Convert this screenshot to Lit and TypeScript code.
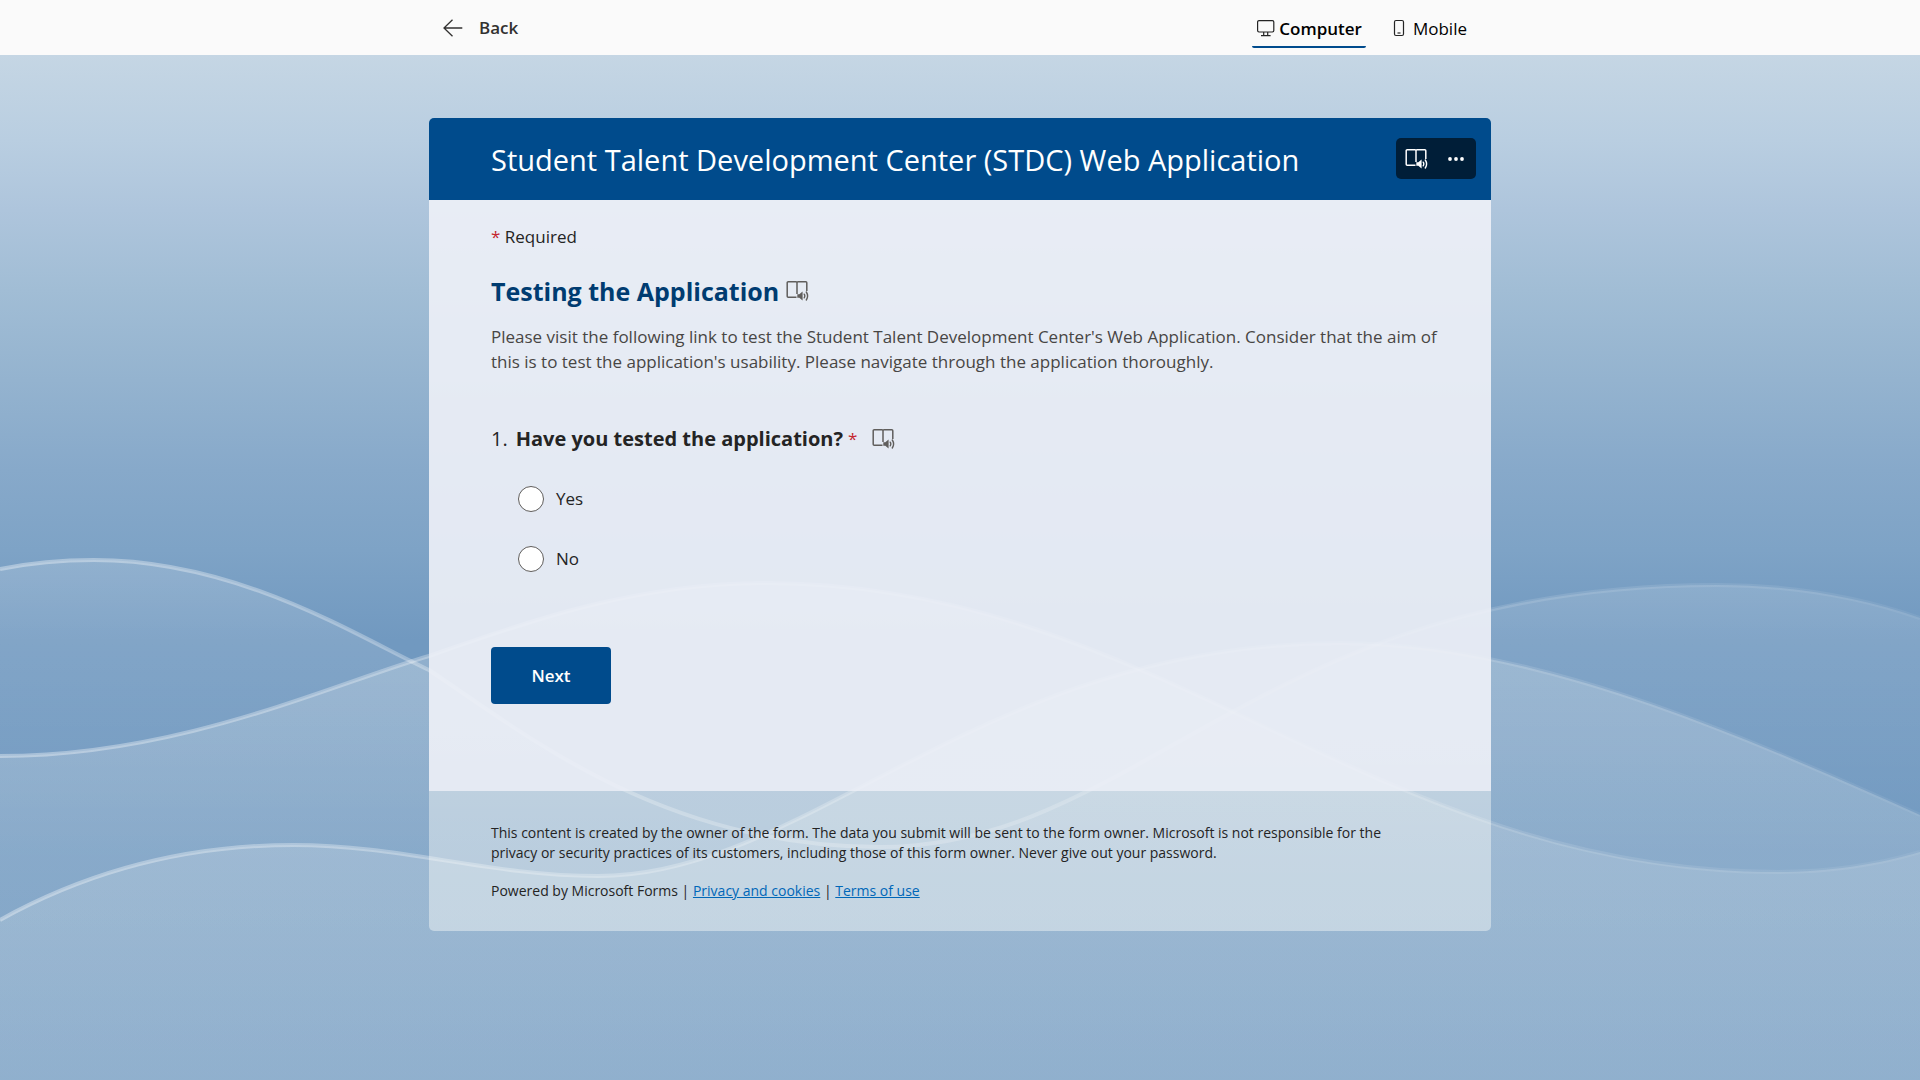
import { LitElement, html, svg, css } from "lit";
import { customElement, state } from "lit/decorators.js";

const WAVE_A =
  "M0 569 C30 563 62 560 94 560 C240 560 360 638 429 670 C520 730 660 847 880 847 C1140 847 1260 585 1717 585 C1790 585 1860 597 1920 618";
const WAVE_B =
  "M0 756 C180 756 330 685 429 656 C530 620 640 583 765 583 C1160 583 1370 872 1778 872 C1830 872 1880 864 1920 852";
const WAVE_C =
  "M0 920 C90 870 190 845 294 845 C400 845 490 876 598 876 C810 876 980 643 1341 643 C1530 643 1730 730 1920 815";

const readerIcon = html`<svg viewBox="0 0 24 24" aria-hidden="true" class="reader">
  <path d="M11.500 18.300H3.200a1 1 0 0 1-1-1V3.700a1 1 0 0 1 1-1H11a1 1 0 0 1 1 1V15M12 3.700a1 1 0 0 1 1-1h7.800a1 1 0 0 1 1 1V12" fill="none" stroke="currentColor" stroke-width="1.500"/>
  <path d="M12.300 15.200h2l3.300-2.800v9.200l-3.300-2.800h-2z" fill="currentColor"/>
  <path d="M19.200 15.200q1.200 1.800 0 3.600M21.300 13q2.600 4 0 8" fill="none" stroke="currentColor" stroke-width="1.400" stroke-linecap="round"/>
</svg>`;

@customElement("app-root")
export class AppRoot extends LitElement {
  @state() private answer = "";

  static styles = css`
    :host {
      display: block;
      font-family: "Open Sans", "Noto Sans", sans-serif;
      color: #242424;
    }
    * {
      box-sizing: border-box;
    }
    button {
      font: inherit;
      border: 0;
      background: none;
      padding: 0;
      color: inherit;
      cursor: pointer;
    }
    .page {
      position: relative;
      display: flex;
      flex-direction: column;
      min-height: 100vh;
      background: linear-gradient(#c5d6e4 55px, #b9cee1 140px, #aec5dc 210px, #a1bdd5 290px, #94b3cf 380px, #87a9ca 470px, #7ea3c6 550px, #7199c0 640px, #6f98c0 100%);
    }
    .waves {
      position: absolute;
      inset: 0;
      width: 100%;
      height: 100%;
    }
    .topbar {
      position: relative;
      background: #fafafa;
    }
    .topbar-inner {
      max-width: 1062px;
      height: 55px;
      margin: 0 auto;
      padding: 0 20px 0 14px;
      display: flex;
      align-items: center;
      justify-content: space-between;
    }
    .back {
      display: flex;
      align-items: center;
      gap: 16px;
      font-size: 17px;
      font-weight: 600;
      color: #323130;
    }
    .back svg {
      width: 20px;
      height: 20px;
    }
    .tabs {
      display: flex;
      gap: 22px;
      margin-top: 3px;
      color: #000000;
      font-size: 17px;
    }
    .tab {
      display: flex;
      align-items: center;
      gap: 3px;
      height: 38px;
      padding: 0 4px;
      border-bottom: 2px solid transparent;
      border-radius: 2px;
    }
    .tab.on {
      border-bottom-color: #004b8d;
      font-weight: 600;
    }
    .tab svg {
      width: 20px;
      height: 20px;
    }
    .tab .phone {
      width: 14px;
      margin-right: 4px;
    }
    .card {
      position: relative;
      width: 100%;
      max-width: 1062px;
      margin: 63px auto 149px;
      border-radius: 5px;
      overflow: hidden;
    }
    .head {
      display: flex;
      align-items: flex-start;
      justify-content: space-between;
      padding: 20px 15px 18px 62px;
      background: #004b8c;
      color: #ffffff;
    }
    h1 {
      margin: 0;
      font-size: 29px;
      line-height: 44px;
      font-weight: 400;
    }
    .tools {
      display: flex;
      align-items: center;
      height: 41px;
      border-radius: 5px;
      background: #001e38;
    }
    .tools button {
      display: flex;
      align-items: center;
      justify-content: center;
      width: 40px;
      height: 41px;
    }
    .reader {
      display: block;
      width: 24px;
      height: 24px;
    }
    .body {
      padding: 24px 48px 87px 62px;
      background: rgba(238, 241, 247, 0.9);
    }
    .required {
      margin: 0;
      font-size: 17px;
      line-height: 26px;
    }
    .star {
      font-size: 17px;
      color: #c4262e;
    }
    .row {
      display: flex;
      align-items: center;
    }
    .listen {
      color: #605e5c;
    }
    .section {
      margin-top: 23px;
      gap: 6px;
    }
    h2 {
      margin: 0;
      font-size: 25px;
      line-height: 36px;
      font-weight: 700;
      color: #003c71;
    }
    .intro {
      margin: 15px 0 0;
      font-size: 17px;
      line-height: 25px;
      color: #484644;
    }
    fieldset {
      margin: 50px 0 0;
      padding: 0;
      border: 0;
      min-width: 0;
    }
    legend {
      padding: 0;
      font-size: 20px;
      line-height: 30px;
    }
    .question {
      font-weight: 700;
      margin: 0 5px 0 8px;
    }
    .question-row .listen {
      margin-left: 14px;
    }
    .option {
      display: flex;
      align-items: center;
      gap: 12px;
      margin: 30px 0 0 27px;
      font-size: 17px;
      line-height: 30px;
      width: max-content;
    }
    .option input {
      appearance: none;
      width: 26px;
      height: 26px;
      margin: 0;
      border: 1px solid #605e5c;
      border-radius: 50%;
      background: #ffffff;
    }
    .option input:checked {
      border: 7px solid #004b8c;
    }
    .next {
      display: block;
      width: 120px;
      height: 57px;
      margin-top: 73px;
      border-radius: 4px;
      background: #004b8c;
      color: #ffffff;
      font-size: 17px;
      font-weight: 600;
    }
    .foot {
      padding: 32px 62px 30px;
      background: rgba(255, 255, 250, 0.42);
      font-size: 14px;
      line-height: 20px;
    }
    .foot p {
      margin: 0;
    }
    .foot p + p {
      margin-top: 18px;
    }
    .foot a {
      color: #0067b8;
    }
  `;

  private wave(d: string, fill: string, stroke: string) {
    return svg`<path d="${d} V1080 H0 Z" fill="url(#${fill})"></path>
      <path d=${d} fill="none" stroke="url(#${stroke})" stroke-width="4"></path>`;
  }

  private option(value: string) {
    return html`<label class="option">
      <input type="radio" name="tested" .value=${value} .checked=${this.answer === value}
        @change=${() => (this.answer = value)} />
      <span>${value}</span>
    </label>`;
  }

  render() {
    return html`
      <div class="page">
        <svg class="waves" viewBox="0 0 1920 1080" preserveAspectRatio="none" aria-hidden="true">
          <defs>
            <linearGradient id="fill" gradientUnits="userSpaceOnUse" x1="0" y1="560" x2="0" y2="850">
              <stop offset="0" stop-color="#fff" stop-opacity=".16"></stop>
              <stop offset="1" stop-color="#fff" stop-opacity=".01"></stop>
            </linearGradient>
            <linearGradient id="fillMid" gradientUnits="userSpaceOnUse" x1="0" y1="583" x2="0" y2="1080">
              <stop offset="0" stop-color="#fffffa" stop-opacity=".24"></stop>
              <stop offset="1" stop-color="#fffffa" stop-opacity=".1"></stop>
            </linearGradient>
            <linearGradient id="fillLow" gradientUnits="userSpaceOnUse" x1="0" y1="643" x2="0" y2="1080">
              <stop offset="0" stop-color="#fffffa" stop-opacity=".22"></stop>
              <stop offset="1" stop-color="#fffffa" stop-opacity=".14"></stop>
            </linearGradient>
            <linearGradient id="line" x1="0" x2="1">
              <stop offset="0" stop-color="#fff" stop-opacity=".36"></stop>
              <stop offset="1" stop-color="#fff" stop-opacity=".06"></stop>
            </linearGradient>
          </defs>
          ${this.wave(WAVE_A, "fill", "line")}
          ${this.wave(WAVE_B, "fillMid", "line")}
          ${this.wave(WAVE_C, "fillLow", "line")}
        </svg>

        <header class="topbar">
          <div class="topbar-inner">
            <button class="back">
              <svg viewBox="0 0 20 20" aria-hidden="true">
                <path d="M19.300 10H1M9.500 1.800 1 10l8.500 8.200" fill="none" stroke="currentColor" stroke-width="1.3"/>
              </svg>
              Back
            </button>
            <nav class="tabs">
              <button class="tab on">
                <svg viewBox="0 0 20 20" aria-hidden="true">
                  <path d="M3 2.600h13.400a1.400 1.400 0 0 1 1.400 1.400v8.600a1.400 1.400 0 0 1-1.400 1.400H3A1.400 1.400 0 0 1 1.600 12.600V4A1.400 1.400 0 0 1 3 2.600zM7.700 14v3.400M11.700 14v3.400M5 17.600h9.600" fill="none" stroke="#242424" stroke-width="1.2"/>
                </svg>
                Computer
              </button>
              <button class="tab">
                <svg class="phone" viewBox="0 0 14 20" aria-hidden="true">
                  <rect x="2.500" y="2.500" width="9" height="15" rx="1.500" fill="none" stroke="#242424" stroke-width="1.2"/>
                  <path d="M5.500 15h3" stroke="#242424" stroke-width="1.2"/>
                </svg>
                Mobile
              </button>
            </nav>
          </div>
        </header>

        <main class="card">
          <div class="head">
            <h1>Student Talent Development Center (STDC) Web Application</h1>
            <div class="tools">
              <button aria-label="Immersive Reader">${readerIcon}</button>
              <button aria-label="More options">
                <svg width="20" height="20" viewBox="0 0 20 20" aria-hidden="true" fill="currentColor">
                  <circle cx="4" cy="10" r="1.900"/><circle cx="10" cy="10" r="1.900"/><circle cx="16" cy="10" r="1.900"/>
                </svg>
              </button>
            </div>
          </div>

          <form class="body" @submit=${(e: Event) => e.preventDefault()}>
            <p class="required"><span class="star">*</span> Required</p>
            <div class="row section">
              <h2>Testing the Application</h2>
              <button type="button" class="listen" aria-label="Immersive Reader">${readerIcon}</button>
            </div>
            <p class="intro">
              Please visit the following link to test the Student Talent Development Center's Web Application. Consider
              that the aim of this is to test the application's usability. Please navigate through the application
              thoroughly.
            </p>
            <fieldset>
              <legend class="row question-row">
                <span>1.</span>
                <span class="question">Have you tested the application?</span>
                <span class="star">*</span>
                <button type="button" class="listen" aria-label="Immersive Reader">${readerIcon}</button>
              </legend>
              ${this.option("Yes")} ${this.option("No")}
            </fieldset>
            <button class="next">Next</button>
          </form>

          <footer class="foot">
            <p>
              This content is created by the owner of the form. The data you submit will be sent to the form owner.
              Microsoft is not responsible for the privacy or security practices of its customers, including those of
              this form owner. Never give out your password.
            </p>
            <p>
              Powered by Microsoft Forms | <a href="#privacy">Privacy and cookies</a> |
              <a href="#terms">Terms of use</a>
            </p>
          </footer>
        </main>
      </div>
    `;
  }
}
